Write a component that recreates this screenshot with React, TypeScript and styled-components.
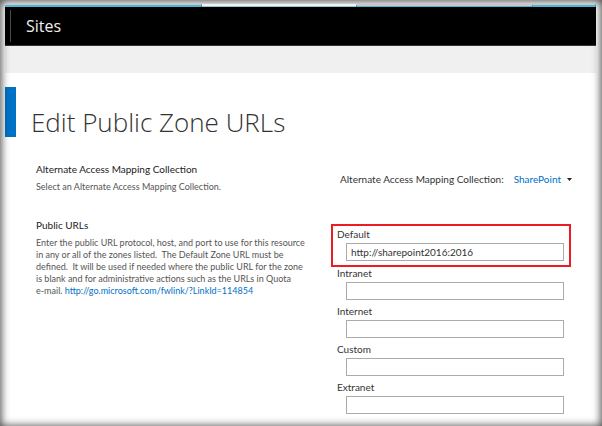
import React, { useState } from "react";
import styled, { createGlobalStyle } from "styled-components";

const GlobalStyle = createGlobalStyle`
  *, *::before, *::after { box-sizing: border-box; }
  body {
    margin: 0;
    background: #fff;
    color: #333;
    font-family: Lato, "Open Sans", sans-serif;
    font-size: 10px;
    line-height: 12px;
  }
`;

const Frame = styled.div`
  position: relative;
  min-height: 100vh;
  padding: 4px 6px 8px 5px;
  overflow: hidden;
`;

const EdgeShade = styled.div`
  position: absolute;
  inset: 0;
  pointer-events: none;
  box-shadow: inset 0 0 8px 1px rgba(0, 0, 0, 0.75);
`;

const TopChrome = styled.div`
  position: relative;
  z-index: 1;
`;

const TabStrip = styled.div`
  display: grid;
  grid-template-columns: 197fr 155fr 176fr 63fr;
  height: 3px;
`;

const StripPart = styled.div<{ $kind: "solid" | "active" | "thin" }>`
  border-top: ${(p) => (p.$kind === "solid" ? 1 : 2)}px solid
    ${(p) => (p.$kind === "active" ? "#f2f2f2" : "#c8c8c8")};
  border-right: 1px solid #3e8ea8;
  background: ${(p) => (p.$kind === "active" ? "#8fc9dc" : "#4fb6d8")};
`;

const SuiteBar = styled.header`
  display: flex;
  align-items: center;
  height: 39px;
  padding-left: 5px;
  background: #000;
  border-bottom: 1px solid #333;
`;

const SuiteTitle = styled.a`
  display: flex;
  align-items: center;
  height: 32px;
  padding-left: 15px;
  border-left: 1px solid #4a4a4a;
  color: #eee;
  font-family: "Open Sans", sans-serif;
  font-size: 16px;
  line-height: 20px;
  text-decoration: none;
`;

const Ribbon = styled.div`
  height: 27px;
  background: #f0f0f0;
`;

const TitleRow = styled.div`
  display: flex;
  align-items: flex-start;
  gap: 15px;
  margin-top: 14px;
`;

const Accent = styled.div`
  width: 11px;
  height: 50px;
  background: #0072c6;
`;

const Title = styled.h1`
  margin: 15px 0 0;
  color: #333;
  font-family: "Open Sans", sans-serif;
  font-size: 26px;
  font-weight: 300;
  line-height: 40px;
`;

const Form = styled.form`
  display: grid;
  grid-template-columns: minmax(0, 295fr) minmax(0, 240fr);
  margin: 20px 25px 0 31px;
`;

const Section = styled.section`
  min-height: 56px;
`;

const SectionTitle = styled.h2`
  margin: 0 0 5px;
  color: #222;
  font-size: 10px;
  font-weight: 400;
  line-height: 14px;
`;

const Description = styled.p`
  max-width: 274px;
  margin: 0;
  color: #555;
  font-size: 9px;
  line-height: 12px;
`;

const NoBreak = styled.span`
  white-space: nowrap;
`;

const Link = styled.a`
  color: #0072c6;
  text-decoration: none;
  white-space: nowrap;
`;

const Picker = styled.div`
  display: flex;
  align-items: center;
  gap: 10px;
  height: 16px;
  margin: 9px 0 0 9px;
  white-space: nowrap;
`;

const PickerControl = styled.span`
  display: flex;
  align-items: center;
  gap: 5px;
`;

const PickerSelect = styled.select`
  appearance: none;
  padding: 0;
  border: 0;
  background: transparent;
  color: #0072c6;
  font: inherit;
`;

const Fields = styled.div`
  display: flex;
  flex-direction: column;
  margin-top: 6px;
`;

const Field = styled.div<{ $marked?: boolean }>`
  display: flex;
  flex-direction: column;
  gap: 3px;
  padding: ${(p) => (p.$marked ? "2px 5px 4px 4px" : "0 7px 5px 6px")};
  border: ${(p) => (p.$marked ? "2px solid #ed1c24" : "0")};
`;

const FieldLabel = styled.label`
  line-height: 12px;
`;

const FieldInput = styled.input`
  width: auto;
  height: 18px;
  margin-left: 9px;
  padding: 0 4px;
  border: 1px solid #ababab;
  background: #fff;
  color: #333;
  font: inherit;
`;

const zones = ["Default", "Intranet", "Internet", "Custom", "Extranet"];

export default function App() {
  const [urls, setUrls] = useState<Record<string, string>>({
    Default: "http://sharepoint2016:2016",
  });

  return (
    <Frame>
      <GlobalStyle />
      <TopChrome>
        <TabStrip>
          <StripPart $kind="solid" />
          <StripPart $kind="active" />
          <StripPart $kind="thin" />
          <StripPart $kind="solid" />
        </TabStrip>
        <SuiteBar>
          <SuiteTitle href="#sites">Sites</SuiteTitle>
        </SuiteBar>
      </TopChrome>
      <Ribbon />
      <main>
        <TitleRow>
          <Accent />
          <Title>Edit Public Zone URLs</Title>
        </TitleRow>
        <Form>
          <Section>
            <SectionTitle>Alternate Access Mapping Collection</SectionTitle>
            <Description>Select an Alternate Access Mapping Collection.</Description>
          </Section>
          <Picker>
            <label htmlFor="collection">Alternate Access Mapping Collection:</label>
            <PickerControl>
              <PickerSelect id="collection">
                <option>SharePoint</option>
              </PickerSelect>
              <svg width="5" height="3" viewBox="0 0 5 3" aria-hidden="true">
                <path d="M0 0h5L2.5 3z" fill="#222" />
              </svg>
            </PickerControl>
          </Picker>
          <Section>
            <SectionTitle>Public URLs</SectionTitle>
            <Description>
              Enter the public URL protocol, host, and port to use for this resource in any or all of
              the zones listed.&nbsp; The Default Zone URL must be defined.&nbsp; It will be used if
              needed where the public URL for the zone is blank and for administrative actions such
              as the URLs in Quota <NoBreak>e-mail.</NoBreak>{" "}
              <Link href="http://go.microsoft.com/fwlink/?LinkId=114854">
                http://go.microsoft.com/fwlink/?LinkId=114854
              </Link>
            </Description>
          </Section>
          <Fields>
            {zones.map((zone) => (
              <Field key={zone} $marked={zone === "Default"}>
                <FieldLabel htmlFor={zone}>{zone}</FieldLabel>
                <FieldInput
                  id={zone}
                  type="text"
                  value={urls[zone] ?? ""}
                  onChange={(e) => setUrls({ ...urls, [zone]: e.target.value })}
                />
              </Field>
            ))}
          </Fields>
        </Form>
      </main>
      <EdgeShade />
    </Frame>
  );
}
